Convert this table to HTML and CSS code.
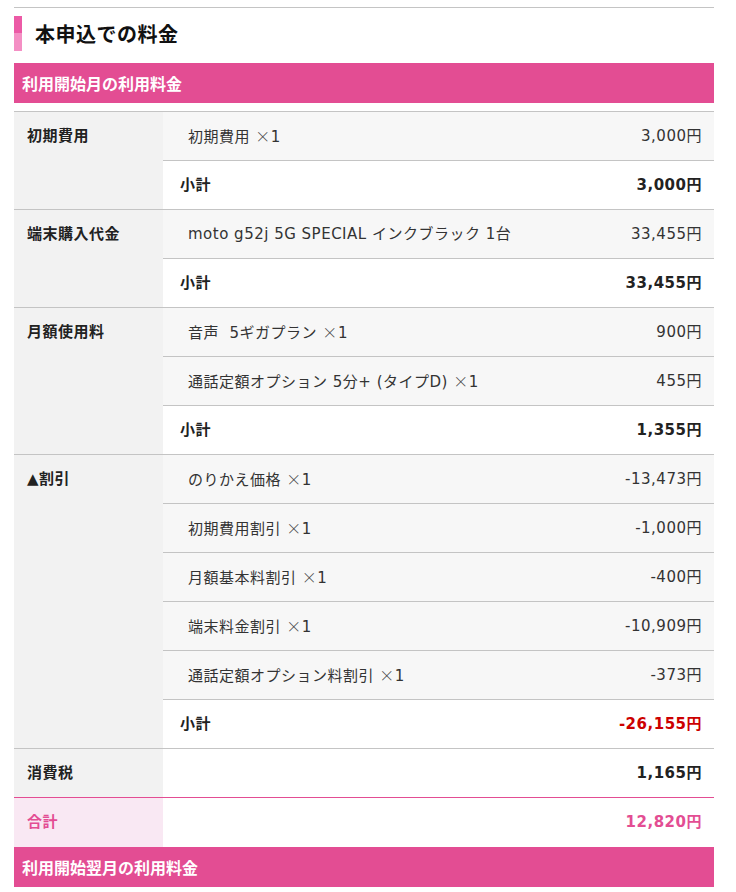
FILE: index.html
```html
<!DOCTYPE html>
<html lang="ja">
<head>
<meta charset="utf-8">
<link rel="stylesheet" href="styles.css">
</head>
<body>
<div class="wrap">
  <h2 class="title"><span class="title-bar"></span>本申込での料金</h2>
  <div class="band">利用開始月の利用料金</div>
  <table class="fee">
    <tbody>
      <tr class="group">
        <th rowspan="2">初期費用</th>
        <td class="name">初期費用 <span class="x">×</span>1</td>
        <td class="amt">3,000円</td>
      </tr>
      <tr class="sub">
        <td class="name">小計</td>
        <td class="amt">3,000円</td>
      </tr>
      <tr class="group">
        <th rowspan="2">端末購入代金</th>
        <td class="name">moto g52j 5G SPECIAL インクブラック 1台</td>
        <td class="amt">33,455円</td>
      </tr>
      <tr class="sub">
        <td class="name">小計</td>
        <td class="amt">33,455円</td>
      </tr>
      <tr class="group">
        <th rowspan="3">月額使用料</th>
        <td class="name">音声&nbsp;&nbsp;5ギガプラン <span class="x">×</span>1</td>
        <td class="amt">900円</td>
      </tr>
      <tr class="item">
        <td class="name">通話定額オプション 5分+ (タイプD) <span class="x">×</span>1</td>
        <td class="amt">455円</td>
      </tr>
      <tr class="sub">
        <td class="name">小計</td>
        <td class="amt">1,355円</td>
      </tr>
      <tr class="group">
        <th rowspan="6">▲割引</th>
        <td class="name">のりかえ価格 <span class="x">×</span>1</td>
        <td class="amt">-13,473円</td>
      </tr>
      <tr class="item">
        <td class="name">初期費用割引 <span class="x">×</span>1</td>
        <td class="amt">-1,000円</td>
      </tr>
      <tr class="item">
        <td class="name">月額基本料割引 <span class="x">×</span>1</td>
        <td class="amt">-400円</td>
      </tr>
      <tr class="item">
        <td class="name">端末料金割引 <span class="x">×</span>1</td>
        <td class="amt">-10,909円</td>
      </tr>
      <tr class="item">
        <td class="name">通話定額オプション料割引 <span class="x">×</span>1</td>
        <td class="amt">-373円</td>
      </tr>
      <tr class="sub">
        <td class="name">小計</td>
        <td class="amt neg">-26,155円</td>
      </tr>
      <tr class="group tax">
        <th>消費税</th>
        <td class="name"></td>
        <td class="amt">1,165円</td>
      </tr>
      <tr class="total">
        <th>合計</th>
        <td class="name"></td>
        <td class="amt">12,820円</td>
      </tr>
    </tbody>
  </table>
  <div class="band">利用開始翌月の利用料金</div>
</div>
</body>
</html>
```

FILE: styles.css
```css
html, body {
  margin: 0;
  padding: 0;
  background: #fff;
}
body {
  font-family: "DejaVu Sans", "Noto Sans CJK JP", sans-serif;
  color: #333;
}
.wrap {
  width: 700px;
  margin: 7px 0 0 14px;
  border-top: 1px solid #c4c4c4;
}
.title {
  display: flex;
  align-items: center;
  margin: 8px 0 12px;
  height: 35px;
  font-family: "Noto Sans CJK JP", sans-serif;
  font-size: 20px;
  letter-spacing: 0.5px;
  font-weight: bold;
  color: #111;
  line-height: 35px;
}
.title-bar {
  width: 8px;
  height: 35px;
  margin-right: 13px;
  background: linear-gradient(#ec5aa6 0, #ec5aa6 50%, #f48fc4 50%, #f48fc4 100%);
}
.band {
  height: 40px;
  line-height: 40px;
  padding-left: 8px;
  background: #e34d93;
  color: #fff;
  font-family: "Noto Sans CJK JP", sans-serif;
  font-weight: bold;
  font-size: 16px;
}
.fee {
  width: 700px;
  margin-top: 8px;
  border-collapse: collapse;
  border-top: 1px solid #c4c4c4;
  font-size: 15px;
  letter-spacing: 0.5px;
}
.fee th,
.fee td {
  height: 49px;
  box-sizing: border-box;
  padding: 0;
  line-height: 24px;
}
.fee th {
  width: 149px;
  background: #f2f2f2;
  text-align: left;
  vertical-align: top;
  padding: 12px 0 0 13px;
  font-weight: bold;
  color: #222;
}
.fee td {
  border-bottom: 1px solid #c4c4c4;
  background: #f7f7f7;
  vertical-align: middle;
}
.fee tr.group th { border-bottom: 1px solid #c4c4c4; }
.fee .name {
  padding-left: 25px;
}
.fee .x {
  font-family: "Noto Sans CJK JP", sans-serif;
  font-weight: 300;
  color: #444;
}
.fee .amt {
  text-align: right;
  padding-right: 12px;
  white-space: nowrap;
}
.fee tr.sub td {
  background: #fff;
  font-weight: bold;
  color: #222;
}
.fee tr.sub .name {
  padding-left: 17px;
}
.fee .neg {
  color: #cc0000 !important;
}
.fee tr.tax td {
  background: #fff;
  font-weight: bold;
  color: #222;
  border-bottom: 1px solid #e34d93;
}
.fee tr.tax th {
  border-bottom: 1px solid #e34d93;
}
.fee tr.total th {
  background: #f9e8f3;
  color: #e34d93;
  border-bottom: none;
}
.fee tr.total td {
  background: #fff;
  color: #e34d93;
  font-weight: bold;
  border-bottom: none;
}
```
